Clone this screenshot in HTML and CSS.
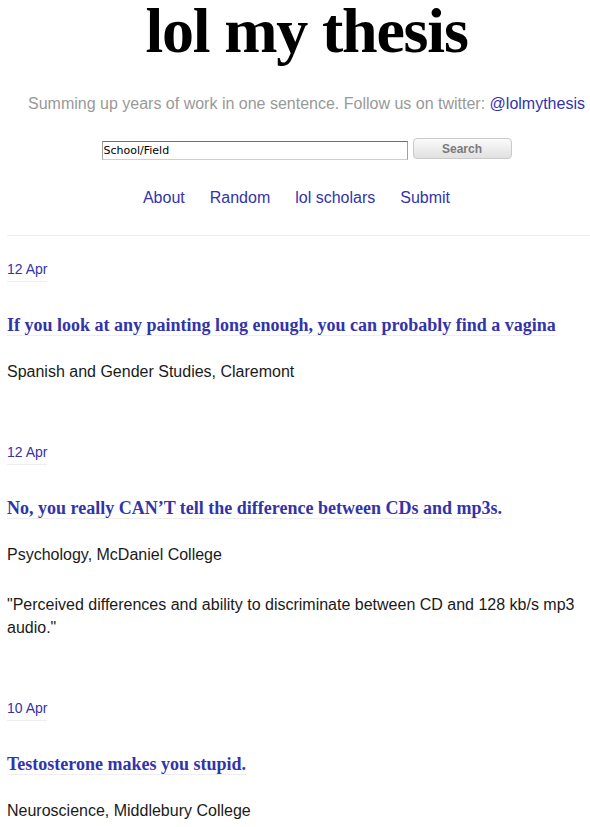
FILE: index.html
```html
<!DOCTYPE html>
<html>
<head>
<meta charset="utf-8">
<link rel="stylesheet" href="styles.css">
</head>
<body>
<header class="header">
  <div class="masthead">
    <h1 class="site-title">lol my thesis</h1>
    <p class="tagline">Summing up years of work in one sentence. Follow us on twitter: <a class="link" href="#">@lolmythesis</a></p>
    <form class="search">
      <input class="search-input" type="text" value="School/Field">
      <button class="search-button" type="button">Search</button>
    </form>
  </div>
  <nav class="nav">
    <a class="link" href="#">About</a>
    <a class="link" href="#">Random</a>
    <a class="link" href="#">lol scholars</a>
    <a class="link" href="#">Submit</a>
  </nav>
</header>
<main class="posts">
  <article class="post">
    <a class="post-date" href="#">12 Apr</a>
    <h2 class="post-title"><a href="#">If you look at any painting long enough, you can probably find a vagina</a></h2>
    <p class="post-text">Spanish and Gender Studies, Claremont</p>
  </article>
  <article class="post">
    <a class="post-date" href="#">12 Apr</a>
    <h2 class="post-title"><a href="#">No, you really CAN’T tell the difference between CDs and mp3s.</a></h2>
    <p class="post-text">Psychology, McDaniel College</p>
    <p class="post-text">"Perceived differences and ability to discriminate between CD and 128 kb/s mp3 audio."</p>
  </article>
  <article class="post">
    <a class="post-date" href="#">10 Apr</a>
    <h2 class="post-title"><a href="#">Testosterone makes you stupid.</a></h2>
    <p class="post-text">Neuroscience, Middlebury College</p>
  </article>
</main>
</body>
</html>
```
FILE: styles.css
```css
html, body {
  margin: 0;
  padding: 0;
  background: #fff;
}
body {
  padding: 0 0 0 7px;
  font-family: "Liberation Sans", Arial, sans-serif;
  font-size: 16px;
  color: #1a1a1a;
}
.link {
  color: #3333aa;
  text-decoration: none;
}
.header {
  text-align: center;
  border-bottom: 1px solid #eeeeee;
  padding-bottom: 27px;
}
.masthead {
  padding-left: 16px;
}
.site-title {
  margin: 0;
  font-family: "Liberation Serif", "Times New Roman", serif;
  font-size: 64px;
  line-height: 62px;
  letter-spacing: -1.2px;
  font-weight: bold;
  color: #000;
}
.tagline {
  margin: 32px 0 0 0;
  color: #999;
  font-size: 16px;
  line-height: 20px;
  white-space: nowrap;
}
.search {
  margin: 24px 0 0 0;
  display: flex;
  justify-content: center;
  align-items: flex-start;
  gap: 5px;
}
.search-input {
  box-sizing: border-box;
  width: 306px;
  height: 19px;
  margin: 3px 0 0 0;
  padding: 0 1px;
  border: 1px solid #a0a0a0;
  border-top-color: #6f6f6f;
  border-bottom-color: #cfcfcf;
  font-family: "DejaVu Sans", sans-serif;
  font-size: 11px;
  color: #000;
  outline: none;
}
.search-button {
  box-sizing: border-box;
  width: 99px;
  height: 21px;
  margin: 0;
  padding: 0;
  border: 1px solid #cacaca;
  border-radius: 4px;
  background: linear-gradient(#fbfbfb, #e0e0e0);
  font-family: "Liberation Sans", Arial, sans-serif;
  font-size: 12px;
  font-weight: bold;
  color: #7a7a7a;
}
.nav {
  margin-top: 28px;
  padding-right: 4px;
  display: flex;
  justify-content: center;
  gap: 25px;
  line-height: 20px;
}
.posts {
  padding-top: 25px;
}
.post {
  margin-bottom: 61px;
}
.post-date {
  display: block;
  width: fit-content;
  font-size: 14px;
  line-height: 16px;
  color: #3333aa;
  text-decoration: none;
  border-bottom: 1px solid #eeeeee;
  padding-bottom: 4px;
}
.post-title {
  margin: 32px 0 0 0;
  font-family: "Liberation Serif", "Times New Roman", serif;
  font-size: 18px;
  line-height: 22px;
  font-weight: bold;
}
.post-title a {
  color: #3333aa;
  text-decoration: none;
  border-bottom: 1px solid #eeeeee;
}
.post-text {
  margin: 24px 0 0 0;
  line-height: 23px;
}
.post-text + .post-text {
  margin-top: 27px;
}
```
